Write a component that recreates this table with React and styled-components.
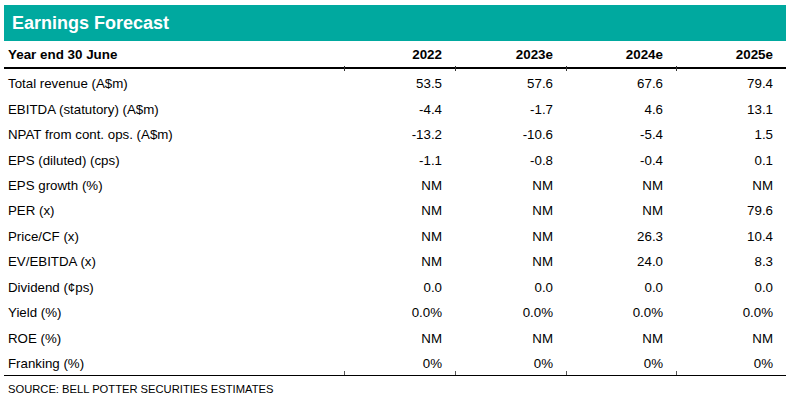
import React from 'react';
import styled, { createGlobalStyle } from 'styled-components';

const GlobalStyle = createGlobalStyle`
  body {
    margin: 0;
    background: #fff;
    font-family: 'Liberation Sans', Arial, sans-serif;
    color: #000;
  }
`;

const Page = styled.div`
  width: 794px;
  height: 404px;
  padding: 5px 8px 0 4px;
  box-sizing: border-box;
`;

const TitleBar = styled.div`
  height: 36px;
  background: #00a99f;
  color: #fff;
  font-weight: 700;
  font-size: 18px;
  display: flex;
  align-items: center;
  padding-left: 8px;
  padding-top: 1px;
  box-sizing: border-box;
`;

const Table = styled.div`
  display: grid;
  grid-template-columns: 340px 111px 111px 110px 110px;
`;

const HeadCell = styled.div`
  position: relative;
  height: 28px;
  display: flex;
  align-items: center;
  justify-content: ${(p) => (p.$num ? 'flex-end' : 'flex-start')};
  padding: ${(p) => (p.$num ? '0 13px 0 0' : '0 0 0 4px')};
  font-weight: 700;
  font-size: 13.4px;
  border-bottom: 2px solid #000;
  box-sizing: border-box;
  ${(p) =>
    p.$tick &&
    `&::after {
      content: '';
      position: absolute;
      left: 0;
      bottom: -4px;
      width: 1px;
      height: 5px;
      background: #333;
    }`}
`;

const Cell = styled.div`
  position: relative;
  height: 25.45px;
  display: flex;
  align-items: center;
  justify-content: ${(p) => (p.$num ? 'flex-end' : 'flex-start')};
  padding: ${(p) => (p.$num ? '0 13px 0 0' : '0 0 0 4px')};
  font-size: 13.3px;
  white-space: nowrap;
  box-sizing: border-box;
  ${(p) => p.$first && 'margin-top: 2px;'}
  ${(p) => p.$last && 'border-bottom: 1.5px solid #000;'}
  ${(p) =>
    p.$last &&
    p.$tick &&
    `&::after {
      content: '';
      position: absolute;
      left: 0;
      bottom: 0;
      width: 1px;
      height: 4px;
      background: #555;
    }`}
`;

const Source = styled.div`
  font-size: 11.2px;
  padding: 7px 0 0 4px;
`;

const years = ['2022', '2023e', '2024e', '2025e'];

const rows = [
  ['Total revenue (A$m)', '53.5', '57.6', '67.6', '79.4'],
  ['EBITDA (statutory) (A$m)', '-4.4', '-1.7', '4.6', '13.1'],
  ['NPAT from cont. ops. (A$m)', '-13.2', '-10.6', '-5.4', '1.5'],
  ['EPS (diluted) (cps)', '-1.1', '-0.8', '-0.4', '0.1'],
  ['EPS growth (%)', 'NM', 'NM', 'NM', 'NM'],
  ['PER (x)', 'NM', 'NM', 'NM', '79.6'],
  ['Price/CF (x)', 'NM', 'NM', '26.3', '10.4'],
  ['EV/EBITDA (x)', 'NM', 'NM', '24.0', '8.3'],
  ['Dividend (¢ps)', '0.0', '0.0', '0.0', '0.0'],
  ['Yield (%)', '0.0%', '0.0%', '0.0%', '0.0%'],
  ['ROE (%)', 'NM', 'NM', 'NM', 'NM'],
  ['Franking (%)', '0%', '0%', '0%', '0%'],
];

export default function App() {
  return (
    <Page>
      <GlobalStyle />
      <TitleBar>Earnings Forecast</TitleBar>
      <Table>
        <HeadCell>Year end 30 June</HeadCell>
        {years.map((y) => (
          <HeadCell key={y} $num $tick>
            {y}
          </HeadCell>
        ))}
        {rows.map((r, ri) =>
          r.map((v, ci) => (
            <Cell
              key={`${ri}-${ci}`}
              $num={ci > 0}
              $tick={ci > 0}
              $first={ri === 0}
              $last={ri === rows.length - 1}
            >
              {v}
            </Cell>
          ))
        )}
      </Table>
      <Source>SOURCE: BELL POTTER SECURITIES ESTIMATES</Source>
    </Page>
  );
}
